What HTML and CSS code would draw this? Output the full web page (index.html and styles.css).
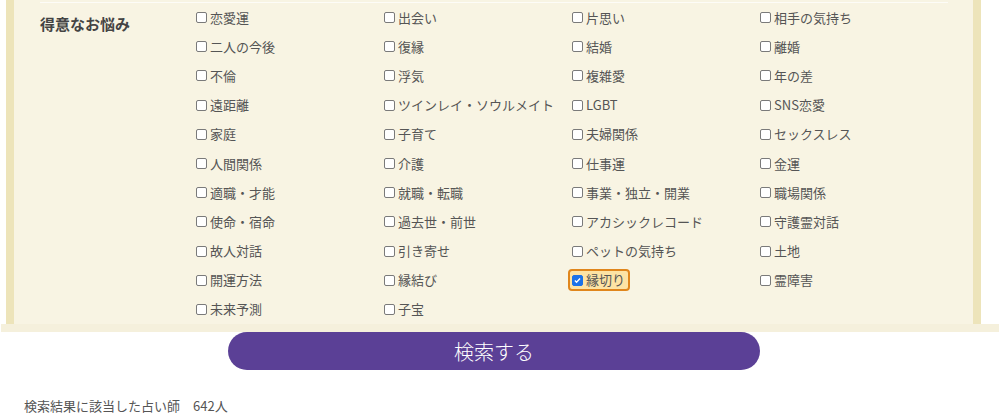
FILE: index.html
```html
<!DOCTYPE html>
<html lang="ja">

<head>
    <meta charset="UTF-8">
    <meta name="viewport" content="width=device-width, initial-scale=1.0">
    <title>占い師検索</title>
    <link rel="stylesheet" href="styles.css">
</head>

<body>
    <form class="search-form">
        <div class="search-panel">
            <div class="search-row">
                <div class="search-row__label">得意なお悩み</div>
                <div class="option-grid">
                    <label class="option"><input type="checkbox">恋愛運</label>
                    <label class="option"><input type="checkbox">出会い</label>
                    <label class="option"><input type="checkbox">片思い</label>
                    <label class="option"><input type="checkbox">相手の気持ち</label>

                    <label class="option"><input type="checkbox">二人の今後</label>
                    <label class="option"><input type="checkbox">復縁</label>
                    <label class="option"><input type="checkbox">結婚</label>
                    <label class="option"><input type="checkbox">離婚</label>

                    <label class="option"><input type="checkbox">不倫</label>
                    <label class="option"><input type="checkbox">浮気</label>
                    <label class="option"><input type="checkbox">複雑愛</label>
                    <label class="option"><input type="checkbox">年の差</label>

                    <label class="option"><input type="checkbox">遠距離</label>
                    <label class="option"><input type="checkbox">ツインレイ・ソウルメイト</label>
                    <label class="option"><input type="checkbox">LGBT</label>
                    <label class="option"><input type="checkbox">SNS恋愛</label>

                    <label class="option"><input type="checkbox">家庭</label>
                    <label class="option"><input type="checkbox">子育て</label>
                    <label class="option"><input type="checkbox">夫婦関係</label>
                    <label class="option"><input type="checkbox">セックスレス</label>

                    <label class="option"><input type="checkbox">人間関係</label>
                    <label class="option"><input type="checkbox">介護</label>
                    <label class="option"><input type="checkbox">仕事運</label>
                    <label class="option"><input type="checkbox">金運</label>

                    <label class="option"><input type="checkbox">適職・才能</label>
                    <label class="option"><input type="checkbox">就職・転職</label>
                    <label class="option"><input type="checkbox">事業・独立・開業</label>
                    <label class="option"><input type="checkbox">職場関係</label>

                    <label class="option"><input type="checkbox">使命・宿命</label>
                    <label class="option"><input type="checkbox">過去世・前世</label>
                    <label class="option"><input type="checkbox">アカシックレコード</label>
                    <label class="option"><input type="checkbox">守護霊対話</label>

                    <label class="option"><input type="checkbox">故人対話</label>
                    <label class="option"><input type="checkbox">引き寄せ</label>
                    <label class="option"><input type="checkbox">ペットの気持ち</label>
                    <label class="option"><input type="checkbox">土地</label>

                    <label class="option"><input type="checkbox">開運方法</label>
                    <label class="option"><input type="checkbox">縁結び</label>
                    <div class="option-cell"><label class="option option--checked"><input type="checkbox" checked>縁切り</label></div>
                    <label class="option"><input type="checkbox">霊障害</label>

                    <label class="option"><input type="checkbox">未来予測</label>
                    <label class="option"><input type="checkbox">子宝</label>
                </div>
            </div>
        </div>
        <div class="search-panel__foot"></div>

        <button type="submit" class="search-button">検索する</button>
    </form>

    <p class="result-count">検索結果に該当した占い師　642人</p>
</body>

</html>
```

FILE: styles.css
```css
body {
    margin: 0;
    background-color: #fff;
    font-family: "Noto Sans CJK JP", "Open Sans", sans-serif;
    color: #555;
}

.search-panel {
    margin: 0 19px 0 6px;
    background-color: #f8f4e3;
    border-left: 8px solid #ede4ba;
    border-right: 8px solid #ede4ba;
}

.search-panel__foot {
    height: 8px;
    margin-left: 1px;
    margin-right: 1px;
    background-color: #f5f0dc;
}

.search-row {
    display: flex;
    margin: 0 25px 0 26px;
    padding-top: 2px;
}

.search-row__label {
    width: 155px;
    flex-shrink: 0;
    padding-top: 11px;
    font-size: 15px;
    line-height: 20px;
    font-weight: bold;
    color: #444;
    border-top: 1px solid #fdfcf7;
}

.option-grid {
    flex: 1;
    display: grid;
    grid-template-columns: repeat(4, 188px);
    grid-auto-rows: 29.2px;
    border-top: 1px solid #fdfcf7;
}

.option {
    display: flex;
    align-items: center;
    gap: 3px;
    font-size: 13px;
    line-height: 18px;
    white-space: nowrap;
}

.option input {
    appearance: none;
    width: 11px;
    height: 11px;
    margin: 0 0 0 1px;
    background-color: #fff;
    border: 1px solid #7a7a7a;
    border-radius: 2px;
}

.option input:checked {
    background-color: #1b72e8;
    border-color: #1b72e8;
    background-image: url("data:image/svg+xml,%3Csvg xmlns='http://www.w3.org/2000/svg' viewBox='0 0 11 11'%3E%3Cpath d='M2.3 5.6l2 2 4.3-4.6' fill='none' stroke='%23fff' stroke-width='1.6'/%3E%3C/svg%3E");
}

.option-cell {
    display: flex;
    align-items: center;
}

.option--checked {
    margin-left: -3px;
    padding: 0 3px 0 1px;
    height: 18px;
    background-color: #fde3a4;
    border: 2px solid #e0861c;
    border-radius: 4px;
}

.search-button {
    display: block;
    width: 532px;
    height: 38px;
    margin-left: 228px;
    padding: 0;
    background-color: #5b4096;
    color: #fff;
    border: none;
    border-radius: 19px;
    font-family: "Noto Sans CJK JP", sans-serif;
    font-size: 20px;
    font-weight: 300;
    cursor: pointer;
}

.result-count {
    margin: 27px 0 0 24px;
    font-size: 13px;
    line-height: 18px;
}
```
